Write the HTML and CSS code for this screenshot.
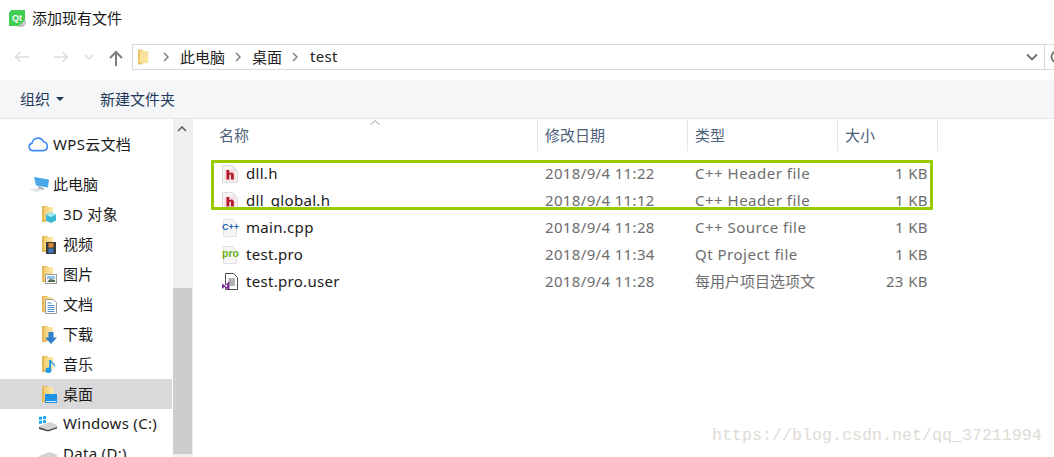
FILE: index.html
```html
<!DOCTYPE html>
<html lang="zh-CN">
<head>
<meta charset="utf-8">
<title>添加现有文件</title>
<link rel="stylesheet" href="styles.css">
</head>
<body>
<svg class="defs" width="0" height="0" aria-hidden="true">
  <defs>
    <linearGradient id="folderFill" x1="0" y1="0" x2="1" y2="0">
      <stop offset="0" stop-color="#f3cf72"/>
      <stop offset="1" stop-color="#fde9a8"/>
    </linearGradient>
    <symbol id="folder" viewBox="0 0 22 18">
      <path d="M1 1h5l1 1v14l-5 1.500-1-1z" fill="#e5b95a"/>
      <path d="M3 2h9v13H3z" fill="url(#folderFill)"/>
    </symbol>
    <symbol id="doc-h" viewBox="0 0 16 18">
      <path d="M0.500 0.500h10l5 5v12h-15z" fill="#f4f4f4" stroke="#dcdcdc"/>
      <path d="M10.500 0.500v5h5z" fill="#e6e6e6"/>
      <rect x="2.500" y="4.500" width="11" height="11.500" rx="1" fill="#f9dcdf"/>
      <path d="M4.500 5h2.800v3.200c.6-.5 1.200-.7 1.900-.7 1.700 0 2.600 1 2.600 2.700v4.300H9v-3.900c0-.7-.2-1-.8-1s-.9.400-.9 1.100v3.800H4.500z" fill="#b3182a"/>
    </symbol>
  </defs>
</svg>

<div class="window">
  <header class="titlebar">
    <svg class="qt-icon" viewBox="0 0 17 17" aria-hidden="true">
      <path d="M2.500 0H16v10l-4 6H0V2.500z" fill="#41cd52"/>
      <path d="M9 16.500l7-6.500 1 1v3l-3 3h-4z" fill="#c4c4c4"/>
      <text x="3" y="10.500" class="qt-label">Qt</text>
    </svg>
    <span class="title-text">添加现有文件</span>
  </header>

  <div class="navbar">
    <div class="nav-buttons">
      <svg class="nav-arrow" viewBox="0 0 16 12" aria-hidden="true"><path d="M15 6H1.500M6.500 1L1.500 6l5 5" fill="none" stroke="#dcdcdc" stroke-width="1.500"/></svg>
      <svg class="nav-arrow" viewBox="0 0 16 12" aria-hidden="true"><path d="M1 6h13.500M9.500 1l5 5-5 5" fill="none" stroke="#dcdcdc" stroke-width="1.500"/></svg>
      <svg class="nav-chev" viewBox="0 0 10 6" aria-hidden="true"><path d="M1 1l4 4 4-4" fill="none" stroke="#dcdcdc" stroke-width="1.500"/></svg>
      <svg class="nav-up" viewBox="0 0 14 16" aria-hidden="true"><path d="M7 16V2M1 8l6-6 6 6" fill="none" stroke="#7d7d7d" stroke-width="2"/></svg>
    </div>
    <div class="address">
      <svg class="addr-folder" viewBox="0 0 14 18" aria-hidden="true">
        <path d="M0 0h5l1 1v15l-5 1.500-1-1z" fill="#e9c063"/>
        <path d="M2 1.500h10v14H2z" fill="#fbe29a"/>
      </svg>
      <svg class="crumb-sep" viewBox="0 0 6 10" aria-hidden="true"><path d="M1 1l4 4-4 4" fill="none" stroke="#7f7f7f" stroke-width="1.500"/></svg>
      <span class="crumb">此电脑</span>
      <svg class="crumb-sep" viewBox="0 0 6 10" aria-hidden="true"><path d="M1 1l4 4-4 4" fill="none" stroke="#7f7f7f" stroke-width="1.500"/></svg>
      <span class="crumb">桌面</span>
      <svg class="crumb-sep" viewBox="0 0 6 10" aria-hidden="true"><path d="M1 1l4 4-4 4" fill="none" stroke="#7f7f7f" stroke-width="1.500"/></svg>
      <span class="crumb latin">test</span>
      <svg class="addr-drop" viewBox="0 0 12 8" aria-hidden="true"><path d="M1 1.500l5 5 5-5" fill="none" stroke="#707070" stroke-width="1.800"/></svg>
      <div class="addr-refresh">
        <svg viewBox="0 0 14 14" aria-hidden="true"><path d="M11 3a5.500 5.500 0 1 0 1.500 4" fill="none" stroke="#707070" stroke-width="1.800"/></svg>
      </div>
    </div>
  </div>

  <div class="toolbar">
    <span class="tool">组织<i class="tool-caret"></i></span>
    <span class="tool">新建文件夹</span>
  </div>

  <div class="body">
    <nav class="sidebar">
      <ul class="tree">
        <li class="tree-row top cloud-row">
          <svg class="ico-cloud" viewBox="0 0 22 17" aria-hidden="true"><path d="M6 15.500H5a4 4 0 0 1-.8-7.900 6.300 6.300 0 0 1 12-1.500 4.800 4.800 0 0 1 .6 9.400z" fill="none" stroke="#3f8cf3" stroke-width="1.700"/></svg>
          <span class="latin">WPS云文档</span>
        </li>
        <li class="tree-row top pc-row">
          <svg class="ico-pc" viewBox="0 0 22 17" aria-hidden="true">
            <path d="M6 1l15 2.500-1 8-12-2z" fill="#4aa8e8"/>
            <path d="M10 10l6 2v2l-6-1.500z" fill="#a9b4bb"/>
            <path d="M1 13.500l8-1.500 6 2.500-7 1.500z" fill="#e3e6e8"/>
          </svg>
          此电脑
        </li>
        <li class="tree-row sub">
          <span class="sub-ico"><svg class="ico-folder"><use href="#folder"/></svg>
            <svg class="ico-over" viewBox="0 0 12 12" aria-hidden="true"><path d="M6 0l5 2.500v6L6 11 1 8.500v-6z" fill="#39b8d4"/><path d="M1 2.500L6 5l5-2.500L6 0z" fill="#a6e8f2"/></svg></span>
          <span class="latin">3D 对象</span>
        </li>
        <li class="tree-row sub">
          <span class="sub-ico"><svg class="ico-folder"><use href="#folder"/></svg>
            <svg class="ico-over" viewBox="0 0 12 12" aria-hidden="true"><rect x="1" width="10" height="12" fill="#3a3a3a"/><rect x="3.500" y="1" width="5" height="4.500" fill="#d88a3a"/><rect x="3.500" y="6.500" width="5" height="4.500" fill="#3f78b8"/></svg></span>
          视频
        </li>
        <li class="tree-row sub">
          <span class="sub-ico"><svg class="ico-folder"><use href="#folder"/></svg>
            <svg class="ico-over" viewBox="0 0 12 12" aria-hidden="true"><rect x=".5" y="2.500" width="11" height="9" fill="#fff" stroke="#9a9a9a"/><rect x="2" y="4" width="8" height="3" fill="#8fc1e8"/><path d="M2 10l3-3 5 1v2z" fill="#4f6b4f"/></svg></span>
          图片
        </li>
        <li class="tree-row sub">
          <span class="sub-ico"><svg class="ico-folder"><use href="#folder"/></svg>
            <svg class="ico-over wide" viewBox="0 0 12 15" aria-hidden="true"><path d="M.5.500h8l3 3v11H.5z" fill="#fff" stroke="#9a9a9a"/><path d="M2.500 4h4M2.500 6.500h7M2.500 8.500h7M2.500 10.500h7M2.500 12.500h7" stroke="#4a8ec9"/></svg></span>
          文档
        </li>
        <li class="tree-row sub">
          <span class="sub-ico"><svg class="ico-folder"><use href="#folder"/></svg>
            <svg class="ico-over" viewBox="0 0 12 12" aria-hidden="true"><path d="M3.500 0h5v5.500H12L6 12 0 5.500h3.500z" fill="#2f7fc9"/></svg></span>
          下载
        </li>
        <li class="tree-row sub">
          <span class="sub-ico"><svg class="ico-folder"><use href="#folder"/></svg>
            <svg class="ico-over wide" viewBox="0 0 12 16" aria-hidden="true"><path d="M5 1v10" stroke="#1f9be8" stroke-width="2"/><path d="M5 1c1 3 5 3.500 5 7" fill="none" stroke="#1f9be8" stroke-width="1.500"/><ellipse cx="3.200" cy="12" rx="3.200" ry="3" fill="#1f9be8"/></svg></span>
          音乐
        </li>
        <li class="tree-row sub selected">
          <span class="sub-ico"><svg class="ico-folder"><use href="#folder"/></svg>
            <svg class="ico-over" viewBox="0 0 12 12" aria-hidden="true"><rect y="2" width="12" height="9" fill="#1c93e6"/><rect x="1" y="9" width="10" height="1" fill="#d8eefb"/></svg></span>
          桌面
        </li>
        <li class="tree-row sub drive">
          <svg class="ico-drive" viewBox="0 0 20 16" aria-hidden="true">
            <path d="M1 1l3-.5v3l-3 .5zM5 .300l3-.3v3l-3 .3zM1 5l3-.5v3L1 8zM5 4.300l3-.3v3l-3 .3z" fill="#1ea7ea"/>
            <path d="M1 10l11-4 7 3v3l-9 3-9-2z" fill="#d2d4d6"/>
            <path d="M1 11l9 3 9-3v1.500L10 15.500 1 13z" fill="#4d4f52"/>
          </svg>
          <span class="latin">Windows (C:)</span>
        </li>
        <li class="tree-row sub drive">
          <svg class="ico-drive" viewBox="0 0 20 16" aria-hidden="true">
            <path d="M1 10l11-4 7 3v3l-9 3-9-2z" fill="#d2d4d6"/>
            <path d="M1 11l9 3 9-3v1.500L10 15.500 1 13z" fill="#4d4f52"/>
          </svg>
          <span class="latin">Data (D:)</span>
        </li>
      </ul>
      <div class="scrollbar">
        <svg class="scroll-up" viewBox="0 0 10 6" aria-hidden="true"><path d="M1 5l4-4 4 4" fill="none" stroke="#606060" stroke-width="1.600"/></svg>
        <div class="scroll-thumb"></div>
      </div>
    </nav>

    <main class="files">
      <div class="file-grid head">
        <div class="col col-name">名称<svg class="sort" viewBox="0 0 10 5" aria-hidden="true"><path d="M.5 4.500L5 .7l4.500 3.800" fill="none" stroke="#a0a0a0"/></svg></div>
        <div class="col">修改日期</div>
        <div class="col">类型</div>
        <div class="col">大小</div>
      </div>
      <div class="file-list">
        <div class="file-grid row">
          <div class="name"><svg class="file-ico"><use href="#doc-h"/></svg><span class="latin">dll.h</span></div>
          <div class="date">2018/9/4 11:22</div><div class="type">C++ Header file</div><div class="size">1 KB</div>
        </div>
        <div class="file-grid row">
          <div class="name"><svg class="file-ico"><use href="#doc-h"/></svg><span class="latin">dll_global.h</span></div>
          <div class="date">2018/9/4 11:12</div><div class="type">C++ Header file</div><div class="size">1 KB</div>
        </div>
        <div class="file-grid row">
          <div class="name"><svg class="file-ico" viewBox="0 0 16 18" aria-hidden="true"><path d="M1.500.500h9l4 4v13h-13z" fill="#f6f6f6" stroke="#e0e0e0"/><text x="0" y="10.500" class="cpp-label" textLength="17" lengthAdjust="spacingAndGlyphs">C++</text></svg><span class="latin">main.cpp</span></div>
          <div class="date">2018/9/4 11:28</div><div class="type">C++ Source file</div><div class="size">1 KB</div>
        </div>
        <div class="file-grid row">
          <div class="name"><svg class="file-ico" viewBox="0 0 16 18" aria-hidden="true"><path d="M1.500.500h9l4 4v13h-13z" fill="#f6f6f6" stroke="#e0e0e0"/><text x="0" y="11" class="pro-label" textLength="17" lengthAdjust="spacingAndGlyphs">pro</text></svg><span class="latin">test.pro</span></div>
          <div class="date">2018/9/4 11:34</div><div class="type">Qt Project file</div><div class="size">1 KB</div>
        </div>
        <div class="file-grid row">
          <div class="name"><svg class="file-ico" viewBox="0 0 16 18" aria-hidden="true">
            <path d="M3.500.500h8l4 4v12h-12z" fill="#fff" stroke="#4a4a4a"/>
            <path d="M6.500 6h6.500M6.500 8h6.500M6.500 10h6.500M8 12h5" stroke="#666"/>
            <path d="M0 10.500l2.500 1.800L7.500 8.500v9l-5-3.500L0 16z" fill="#7b2f9e"/>
            <path d="M2.500 12.800l2.500 1.500v-3z" fill="#fff"/>
          </svg><span class="latin">test.pro.user</span></div>
          <div class="date">2018/9/4 11:28</div><div class="type cjk">每用户项目选项文</div><div class="size">23 KB</div>
        </div>
      </div>
    </main>
  </div>

  <div class="highlight"></div>
  <div class="watermark">https://blog.csdn.net/qq_37211994</div>
</div>
</body>
</html>
```

FILE: styles.css
```css
* { box-sizing: border-box; }

html, body {
  margin: 0;
  height: 100%;
  overflow: hidden;
  background: #fff;
}

.defs { position: absolute; }

.window {
  position: relative;
  width: 1054px;
  height: 457px;
  overflow: hidden;
  font-family: "Noto Sans", "Noto Sans CJK SC", sans-serif;
  font-size: 15px;
  color: #1a1a1a;
}

.latin { letter-spacing: .3px; }

/* title bar */
.titlebar {
  display: flex;
  align-items: center;
  height: 36px;
  padding: 0 0 2px 9px;
}
.qt-icon { width: 17px; height: 17px; margin: 2px 6px 0 0; }
.qt-label { font: 700 9px "Liberation Sans", sans-serif; fill: #fff; }
.title-text { font-size: 15px; }

/* back / forward / address */
.navbar {
  display: flex;
  align-items: flex-start;
  height: 44px;
  padding-top: 8px;
}
.nav-buttons {
  display: flex;
  align-items: center;
  width: 132px;
  height: 26px;
}
.nav-arrow { width: 16px; height: 12px; }
.nav-arrow:first-child { margin-left: 14px; }
.nav-arrow + .nav-arrow { margin-left: 23px; }
.nav-chev { width: 10px; height: 6px; margin-left: 15px; }
.nav-up { width: 14px; height: 16px; margin-left: 15px; margin-top: 2px; }

.address {
  display: flex;
  align-items: center;
  flex: 1;
  height: 26px;
  padding-bottom: 2px;
  border: 1px solid #d9d9d9;
  border-right: 0;
}
.address > svg { margin-top: 2px; }
.addr-folder { width: 12px; height: 17px; margin-left: 5px; }
.crumb-sep { width: 6px; height: 10px; margin: 2px 11px 0 13px; }
.crumb { font-size: 15px; color: #222; }
.crumb + .crumb-sep { margin-left: 10px; margin-right: 11px; }
.crumb.latin { margin-left: 1px; }
.addr-drop { width: 12px; height: 8px; margin-left: auto; margin-right: 6px; }
.addr-refresh {
  display: flex;
  align-items: center;
  width: 10px;
  height: 26px;
  margin: 0 0 -2px;
  border-left: 1px solid #d9d9d9;
  overflow: hidden;
  padding-left: 5px;
}
.addr-refresh svg { width: 14px; height: 14px; flex: none; }

/* command bar */
.toolbar {
  display: flex;
  align-items: center;
  gap: 36px;
  height: 39px;
  padding: 0 0 2px 20px;
  background: #f5f6f7;
  border-bottom: 1px solid #e5e5e5;
  color: #1e395b;
  font-size: 15px;
}
.tool { display: flex; align-items: center; }
.tool-caret {
  width: 0;
  height: 0;
  margin: 2px 0 0 6px;
  border: 4px solid transparent;
  border-top: 4px solid #1e395b;
  border-bottom: 0;
}

/* tree + file list */
.body {
  display: flex;
  height: 338px;
}
.sidebar {
  display: flex;
  flex: none;
  width: 193px;
}
.tree {
  flex: none;
  width: 173px;
  margin: 0;
  padding: 10px 0 0;
  list-style: none;
}
.tree-row {
  display: flex;
  align-items: center;
  width: 172px;
  height: 30px;
  padding-bottom: 2px;
  white-space: nowrap;
}
.tree-row > svg, .sub-ico { margin-top: 2px; }
.tree-row.pc-row { margin-top: 10px; }
.tree-row.top { padding-left: 28px; }
.tree-row.sub { padding-left: 41px; }
.tree-row.drive { padding-left: 38px; }
.tree-row.selected { background: #d9d9d9; }

.ico-cloud { width: 21px; height: 16px; margin-right: 4px; }
.ico-pc { width: 22px; height: 17px; margin-right: 3px; }
.sub-ico {
  position: relative;
  display: block;
  flex: none;
  width: 22px;
  height: 18px;
}
.ico-folder { width: 22px; height: 18px; }
.ico-over {
  position: absolute;
  right: 6px;
  bottom: -1px;
  width: 12px;
  height: 12px;
}
.ico-over.wide { height: 15px; }
.ico-drive { width: 20px; height: 16px; margin-right: 5px; }

.scrollbar {
  display: flex;
  flex-direction: column;
  width: 20px;
  background: #f0f0f0;
  padding-right: 1px;
}
.scroll-up { width: 10px; height: 6px; margin: 7px 0 0 4px; }
.scroll-thumb {
  width: 19px;
  height: 166px;
  margin-top: 156px;
  background: #cdcdcd;
}

.files { flex: 1; padding-left: 21px; }
.file-grid {
  display: grid;
  grid-template-columns: 324px 150px 150px 100px;
}
.head { height: 32px; color: #4c607a; font-size: 15px; }
.col {
  position: relative;
  display: flex;
  align-items: center;
  padding: 0 0 2px 7px;
  border-right: 1px solid #e5e5e5;
}
.col-name { padding-left: 5px; }
.sort {
  position: absolute;
  left: 156px;
  top: 1px;
  width: 10px;
  height: 5px;
}
.file-list { padding-top: 9px; }
.row {
  height: 27px;
  align-items: center;
  color: #6d6d6d;
  font-size: 15px;
}
.row > div { padding: 0 0 2px 7px; white-space: nowrap; }
.row > .date { letter-spacing: .35px; }
.row > .type { letter-spacing: .5px; }
.row > .type.cjk { letter-spacing: 0; }
.row > .name {
  display: flex;
  align-items: center;
  padding-left: 8px;
  color: #1a1a1a;
}
.row > .size { padding-right: 10px; text-align: right; letter-spacing: .4px; }
.file-ico { width: 16px; height: 18px; margin: 2px 8px 0 0; flex: none; overflow: visible; }
.cpp-label {
  font: 700 9px "Liberation Sans", sans-serif;
  fill: #2b5fb0;
}
.pro-label {
  font: 700 10.500px "Liberation Sans", sans-serif;
  fill: #6aaf1e;
}

/* annotation drawn over the list */
.highlight {
  position: absolute;
  left: 211px;
  top: 160px;
  width: 722px;
  height: 50px;
  border: 3px solid #99cc00;
}
.watermark {
  position: absolute;
  left: 712px;
  top: 426px;
  font-family: "Liberation Mono", monospace;
  font-size: 16.67px;
  color: #dedcd5;
  white-space: nowrap;
}
```
